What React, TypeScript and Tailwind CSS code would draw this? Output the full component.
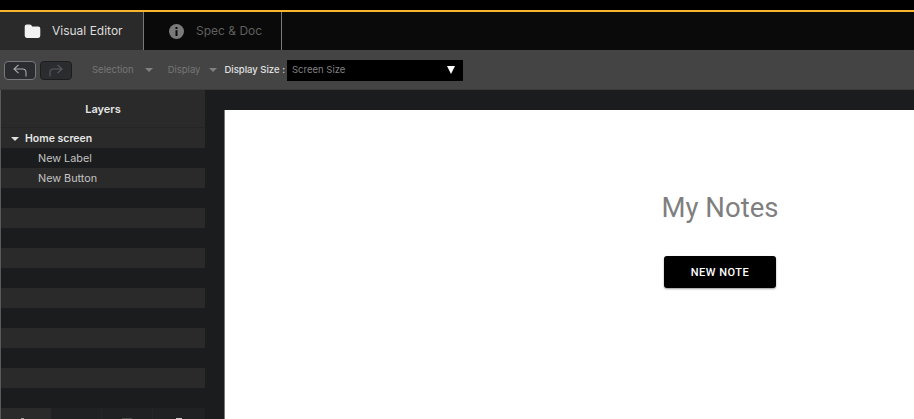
import { Folder } from "lucide-react";

const emptyRows = [0, 1, 2, 3, 4, 5, 6, 7, 8, 9, 10];

function BackIcon({ className }: { className: string }) {
  return (
    <svg viewBox="0 0 14 13" className={className} fill="none" stroke="currentColor" strokeWidth="1.1">
      <path d="M5.5 0.8 1 5l4.5 4.2M1 5h8.5c2.2 0 3.5 1.4 3.5 3.3V12.5" />
    </svg>
  );
}

function ForwardIcon({ className }: { className: string }) {
  return (
    <svg viewBox="0 0 14 13" className={className} fill="none" stroke="currentColor" strokeWidth="1.1">
      <path d="M8.5 0.8 13 5 8.5 9.2M13 5H4.5C2.3 5 1 6.4 1 8.3V12.5" />
    </svg>
  );
}

function InfoDot() {
  return (
    <svg viewBox="0 0 15 15" className="w-[15px] h-[15px]">
      <circle cx="7.5" cy="7.5" r="7.5" fill="#7a7a7a" />
      <rect x="6.5" y="3" width="2" height="2" fill="#0a0a0a" />
      <rect x="6.5" y="6.2" width="2" height="5.8" fill="#0a0a0a" />
    </svg>
  );
}

function Caret({ className }: { className: string }) {
  return <span className={`w-0 h-0 border-x-[4px] border-x-transparent border-t-[4px] ${className}`} />;
}

export default function App() {
  return (
    <div className="w-[914px] h-[419px] overflow-hidden flex flex-col bg-[#1b1c1e] font-['Inter',sans-serif] antialiased">
      <div className="h-[10px] bg-black" />
      <div className="h-[2px] bg-[#fbb42d]" />

      {/* tabs */}
      <div className="h-[38px] flex bg-[#0a0a0a]">
        <div className="w-[144px] flex items-center bg-[#2a2a2a] border-r border-[#77797b] pl-[24px] gap-[11px]">
          <Folder size={17} className="text-[#f2f2f2] fill-[#f2f2f2]" />
          <span className="text-[12px] text-[#dcdcdc]">Visual Editor</span>
        </div>
        <div className="w-[138px] flex items-center border-r border-[#77797b] pl-[25px] gap-[12px]">
          <InfoDot />
          <span className="text-[12px] text-[#5f5f5f]">Spec &amp; Doc</span>
        </div>
      </div>

      {/* toolbar */}
      <div className="h-[40px] flex items-center bg-[#444444] border-b border-[#3a3a3a] pl-[4px] pt-[1px]">
        <button className="w-[32px] h-[19px] flex items-center justify-center rounded-[4px] bg-[#2a2c30] border border-[#77797b] text-[#aaaaaa]">
          <BackIcon className="w-[14px] h-[13px]" />
        </button>
        <button className="w-[32px] h-[19px] ml-[4px] flex items-center justify-center rounded-[4px] bg-[#2a2c30] border border-[#1c1c1c] text-[#5a5c60]">
          <ForwardIcon className="w-[14px] h-[13px]" />
        </button>
        <span className="ml-[20px] text-[9.5px] text-[#767676]">Selection</span>
        <Caret className="ml-[11px] border-t-[#808080]" />
        <span className="ml-[15px] text-[9.5px] text-[#767676]">Display</span>
        <Caret className="ml-[9px] border-t-[#808080]" />
        <span className="ml-[7px] text-[9.5px] font-medium text-[#e0e0e0]">Display Size :</span>
        <div className="ml-[2px] w-[176px] h-[21px] flex items-center justify-between bg-black pl-[5px] pr-[8px]">
          <span className="text-[9.5px] text-[#808080]">Screen Size</span>
          <span className="w-0 h-0 border-x-[4px] border-x-transparent border-t-[8px] border-t-white" />
        </div>
      </div>

      <div className="flex-1 min-h-0 flex">
        {/* layers */}
        <div className="w-[205px] shrink-0 border-l border-[#5a5a5a] flex flex-col">
          <div className="h-[38px] shrink-0 flex items-center justify-center bg-[#2a2a2a] border-b border-[#252525] pt-[1px]">
            <span className="text-[11px] font-semibold text-[#e6e6e6]">Layers</span>
          </div>
          <div className="h-[20px] shrink-0 flex items-center bg-[#2a2a2a] pl-[10px] pt-[1px]">
            <Caret className="border-t-[#e0e0e0]" />
            <span className="ml-[6px] text-[10.5px] font-semibold text-[#e6e6e6]">Home screen</span>
          </div>
          <div className="h-[20px] shrink-0 flex items-center pl-[37px] pt-[2px]">
            <span className="text-[10.8px] text-[#c4c4c4]">New Label</span>
          </div>
          <div className="h-[20px] shrink-0 flex items-center bg-[#2a2a2a] pl-[37px] pt-[2px]">
            <span className="text-[10.8px] text-[#c4c4c4]">New Button</span>
          </div>
          {emptyRows.map((i) => (
            <div key={i} className={`h-[20px] shrink-0 ${i % 2 === 1 ? "bg-[#2a2a2a]" : ""}`} />
          ))}
          <div className="h-[11px] shrink-0 flex bg-[#202123]">
            <div className="w-[50px] bg-[#2a2a2a] flex items-end justify-center pr-[8px]">
              <span className="w-[3px] h-[1px] bg-[#9a9a9a]" />
            </div>
            <div className="w-[51px] border-r border-[#252527]" />
            <div className="w-[51px] border-r border-[#252527] flex items-end justify-center">
              <span className="w-[10px] h-[1px] bg-[#4a4a4a]" />
            </div>
            <div className="flex-1 flex items-end justify-center">
              <span className="w-[6px] h-[1px] bg-[#c8c8c8]" />
            </div>
          </div>
        </div>

        {/* canvas */}
        <div className="flex-1 min-w-0 pl-[19px] pt-[20px]">
          <div className="h-full bg-white border-l border-[#77797b] flex flex-col items-center pl-[301px]">
            <div className="mt-[80px] font-['Roboto',sans-serif] text-[27.5px] leading-[36px] text-[#7f7f7f]">My Notes</div>
            <button className="mt-[30px] w-[112px] h-[32px] pt-[3px] rounded-[3px] bg-black text-white font-['Roboto',sans-serif] text-[11px] font-medium tracking-[0.5px] shadow-[0_1px_2px_rgba(0,0,0,0.4)]">
              NEW NOTE
            </button>
          </div>
        </div>
      </div>
    </div>
  );
}
